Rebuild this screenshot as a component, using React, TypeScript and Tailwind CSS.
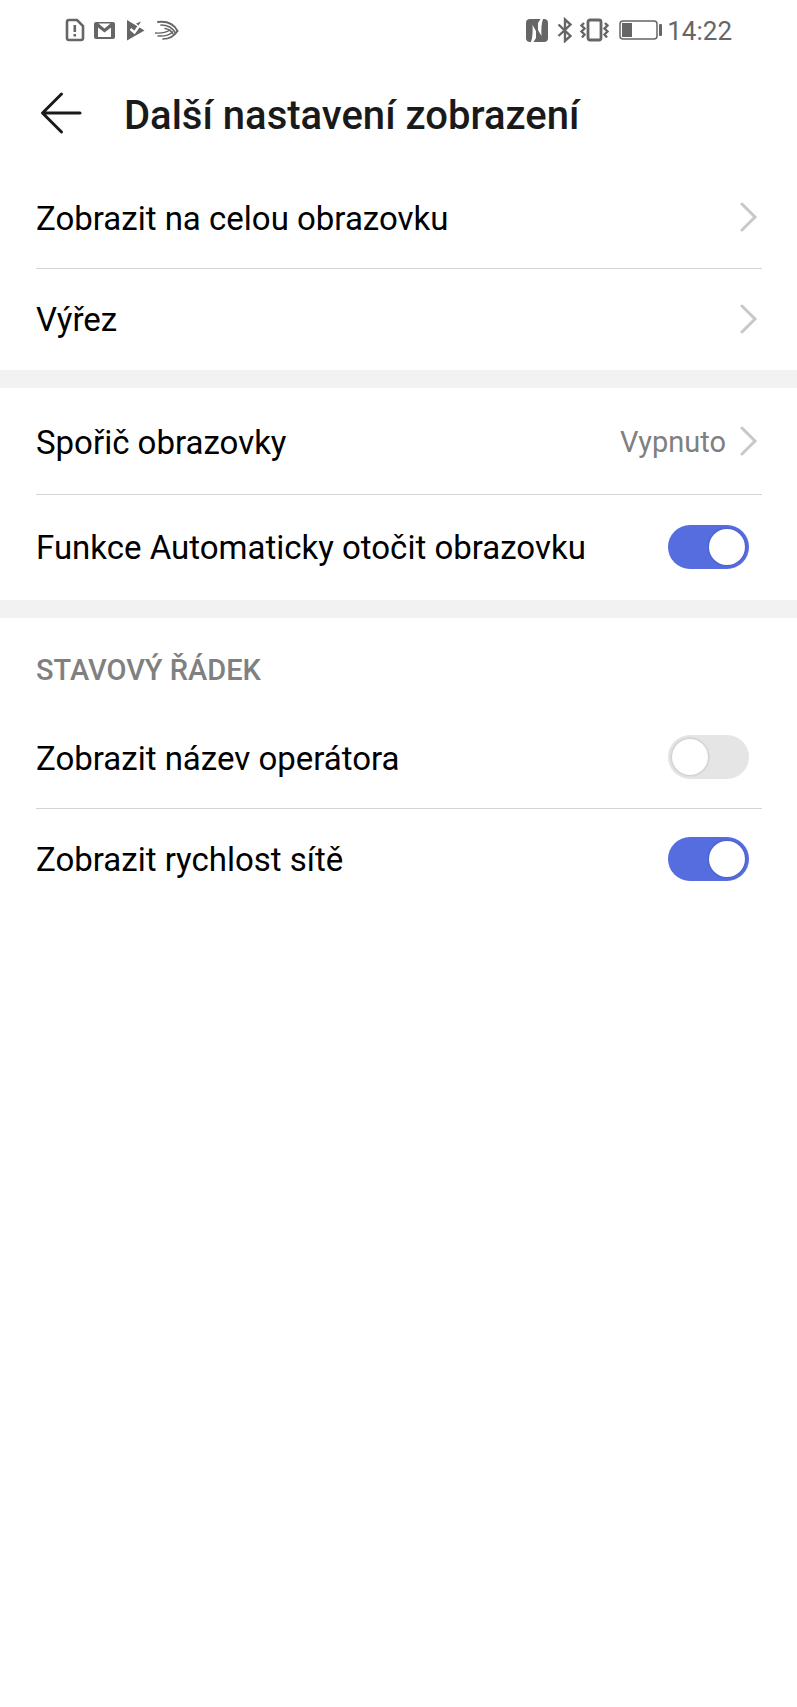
import { useState } from "react";

function StatusBar() {
  return (
    <div className="flex h-15 items-center justify-between pr-[65px] pl-16 text-[#666]">
      <div className="flex items-center gap-2">
        <svg width="22" height="26" viewBox="0 0 22 26" fill="none" aria-hidden="true">
          <path d="M5 3h8l6 6v12a2 2 0 0 1-2 2H5a2 2 0 0 1-2-2V5a2 2 0 0 1 2-2z" stroke="currentColor" strokeWidth="2.6" />
          <path d="M10.800 8v7M10.800 17v2.600" stroke="currentColor" strokeWidth="2.600" />
        </svg>
        <svg width="22" height="26" viewBox="0 0 22 26" aria-hidden="true">
          <rect x="0" y="5" width="21" height="17" rx="2" fill="currentColor" />
          <path d="M4.500 6.500h12l-6 5z" fill="#fff" />
          <path d="M4 20v-9.500l6.500 5 6.500-5V20z" fill="#fff" />
        </svg>
        <svg width="22" height="26" viewBox="0 0 22 26" aria-hidden="true">
          <path d="M3 3v20.500L20.500 13.500z" fill="currentColor" />
          <path d="M6.500 12l4 3.500L15 9" stroke="#fff" strokeWidth="2.400" fill="none" />
          <path d="M12 6.500l2.500 2L17 4.500z" fill="currentColor" />
        </svg>
        <svg width="26" height="26" viewBox="0 0 26 26" fill="none" stroke="currentColor" strokeLinecap="round" aria-hidden="true">
          <path d="M4 5C13 4 20 7 23.500 14" strokeWidth="2" />
          <path d="M7 8C13 8 18.500 10.500 21.500 16" strokeWidth="1.700" />
          <path d="M11 11.500c4 .5 6.500 2.500 8.500 6" strokeWidth="1.500" />
          <path d="M1.500 16C8 16.500 12 15.500 16 13" strokeWidth="1.400" />
          <path d="M4 19C11 19.500 15 18.500 18.500 15" strokeWidth="1.500" />
          <path d="M9 22C15 22 20 19.500 23.500 14" strokeWidth="1.700" />
        </svg>
      </div>
      <div className="flex items-center">
        <svg width="24" height="26" viewBox="0 0 24 26" aria-hidden="true">
          <rect x="1" y="2" width="22" height="23" rx="4" fill="currentColor" />
          <path d="M6 25C7.800 20 7.800 13 7.500 8l3.500 6v7L8.500 25z" fill="#fff" />
          <path d="M18 2C16.200 7 16.200 14 16.500 19L13 13V6L15.500 2z" fill="#fff" />
        </svg>
        <svg className="ml-2" width="16" height="26" viewBox="0 0 16 26" fill="none" stroke="currentColor" strokeWidth="2.4" aria-hidden="true">
          <path d="M1.500 7.500l12 11.500-5.500 5V2.500l5.500 5L1.500 19" />
        </svg>
        <svg className="ml-1.5" width="32" height="26" viewBox="0 0 32 26" fill="none" stroke="currentColor" aria-hidden="true">
          <rect x="9" y="3" width="13" height="20" rx="2" strokeWidth="2.800" />
          <path d="M5 6l-2.500 2.500 3 3-3 3 3 3L3 20.500M26 6l2.500 2.500-3 3 3 3-3 3 2.500 3" strokeWidth="2.400" />
        </svg>
        <svg className="ml-2" width="44" height="22" viewBox="0 0 44 22" aria-hidden="true">
          <rect x="1" y="2" width="37" height="18" rx="3" fill="none" stroke="currentColor" strokeWidth="1.500" />
          <rect x="3" y="4" width="10" height="14" fill="currentColor" />
          <rect x="40" y="5" width="3" height="12" rx="1" fill="currentColor" />
        </svg>
        <span className="ml-1 pt-px text-[26px] leading-8">14:22</span>
      </div>
    </div>
  );
}

function Chevron() {
  return (
    <svg className="mr-1" width="18" height="32" viewBox="0 0 18 32" fill="none" aria-hidden="true">
      <path d="M2 3l13 13L2 29" stroke="#c8c8c8" strokeWidth="3" strokeLinecap="round" />
    </svg>
  );
}

function LinkRow({ label, value }: { label: string; value?: string }) {
  return (
    <a href="#" className="flex flex-1 items-center justify-between">
      <span className="pt-[3px]">{label}</span>
      <span className="flex items-center gap-3.5">
        {value && <span className="pt-0.5 text-[29px] text-[#808080]">{value}</span>}
        <Chevron />
      </span>
    </a>
  );
}

function SwitchRow({ label, initial }: { label: string; initial: boolean }) {
  const [on, setOn] = useState(initial);

  return (
    <label className="flex flex-1 cursor-pointer items-center justify-between">
      <span className="pt-[3px]">{label}</span>
      <input
        type="checkbox"
        role="switch"
        checked={on}
        onChange={(e) => setOn(e.target.checked)}
        className="mr-[13px] h-11 w-[81px] shrink-0 cursor-pointer appearance-none rounded-full bg-[#e5e5e5] p-1 before:block before:size-9 before:rounded-full before:bg-white before:shadow-[0_0_3px_rgba(0,0,0,0.25)] checked:bg-[#566de0] checked:before:ml-auto"
      />
    </label>
  );
}

export default function App() {
  return (
    <div className="min-h-screen bg-white font-[Roboto,sans-serif] text-[33px] leading-10 text-black">
      <StatusBar />
      <header className="flex h-[106px] items-center gap-10 px-10">
        <button type="button" aria-label="Zpět">
          <svg width="44" height="44" viewBox="0 0 44 44" fill="none" stroke="#1a1a1a" strokeWidth="3" strokeLinecap="round" strokeLinejoin="round">
            <path d="M21.500 3L2.500 22l19 19M3 22h37" />
          </svg>
        </button>
        <h1 className="pt-1.5 text-[40px] font-medium text-[#1a1a1a]">Další nastavení zobrazení</h1>
      </header>
      <main>
        <section className="pr-[35px] pl-9">
          <div className="flex h-[103px] border-b border-[#d4d4d4]">
            <LinkRow label="Zobrazit na celou obrazovku" />
          </div>
          <div className="flex h-[101px] pb-0.5">
            <LinkRow label="Výřez" />
          </div>
        </section>
        <section className="border-t-18 border-[#f2f2f2] pr-[35px] pl-9">
          <div className="flex h-[107px] border-b border-[#d4d4d4]">
            <LinkRow label="Spořič obrazovky" value="Vypnuto" />
          </div>
          <div className="flex h-[105px] pb-0.5">
            <SwitchRow label="Funkce Automaticky otočit obrazovku" initial={true} />
          </div>
        </section>
        <section className="border-t-18 border-[#f2f2f2] pr-[35px] pl-9">
          <h2 className="pt-8 pb-4 text-[29px] font-medium text-[#808080]">STAVOVÝ ŘÁDEK</h2>
          <div className="flex h-[103px] border-b border-[#d4d4d4]">
            <SwitchRow label="Zobrazit název operátora" initial={false} />
          </div>
          <div className="flex h-[101px] pb-0.5">
            <SwitchRow label="Zobrazit rychlost sítě" initial={true} />
          </div>
        </section>
      </main>
    </div>
  );
}
